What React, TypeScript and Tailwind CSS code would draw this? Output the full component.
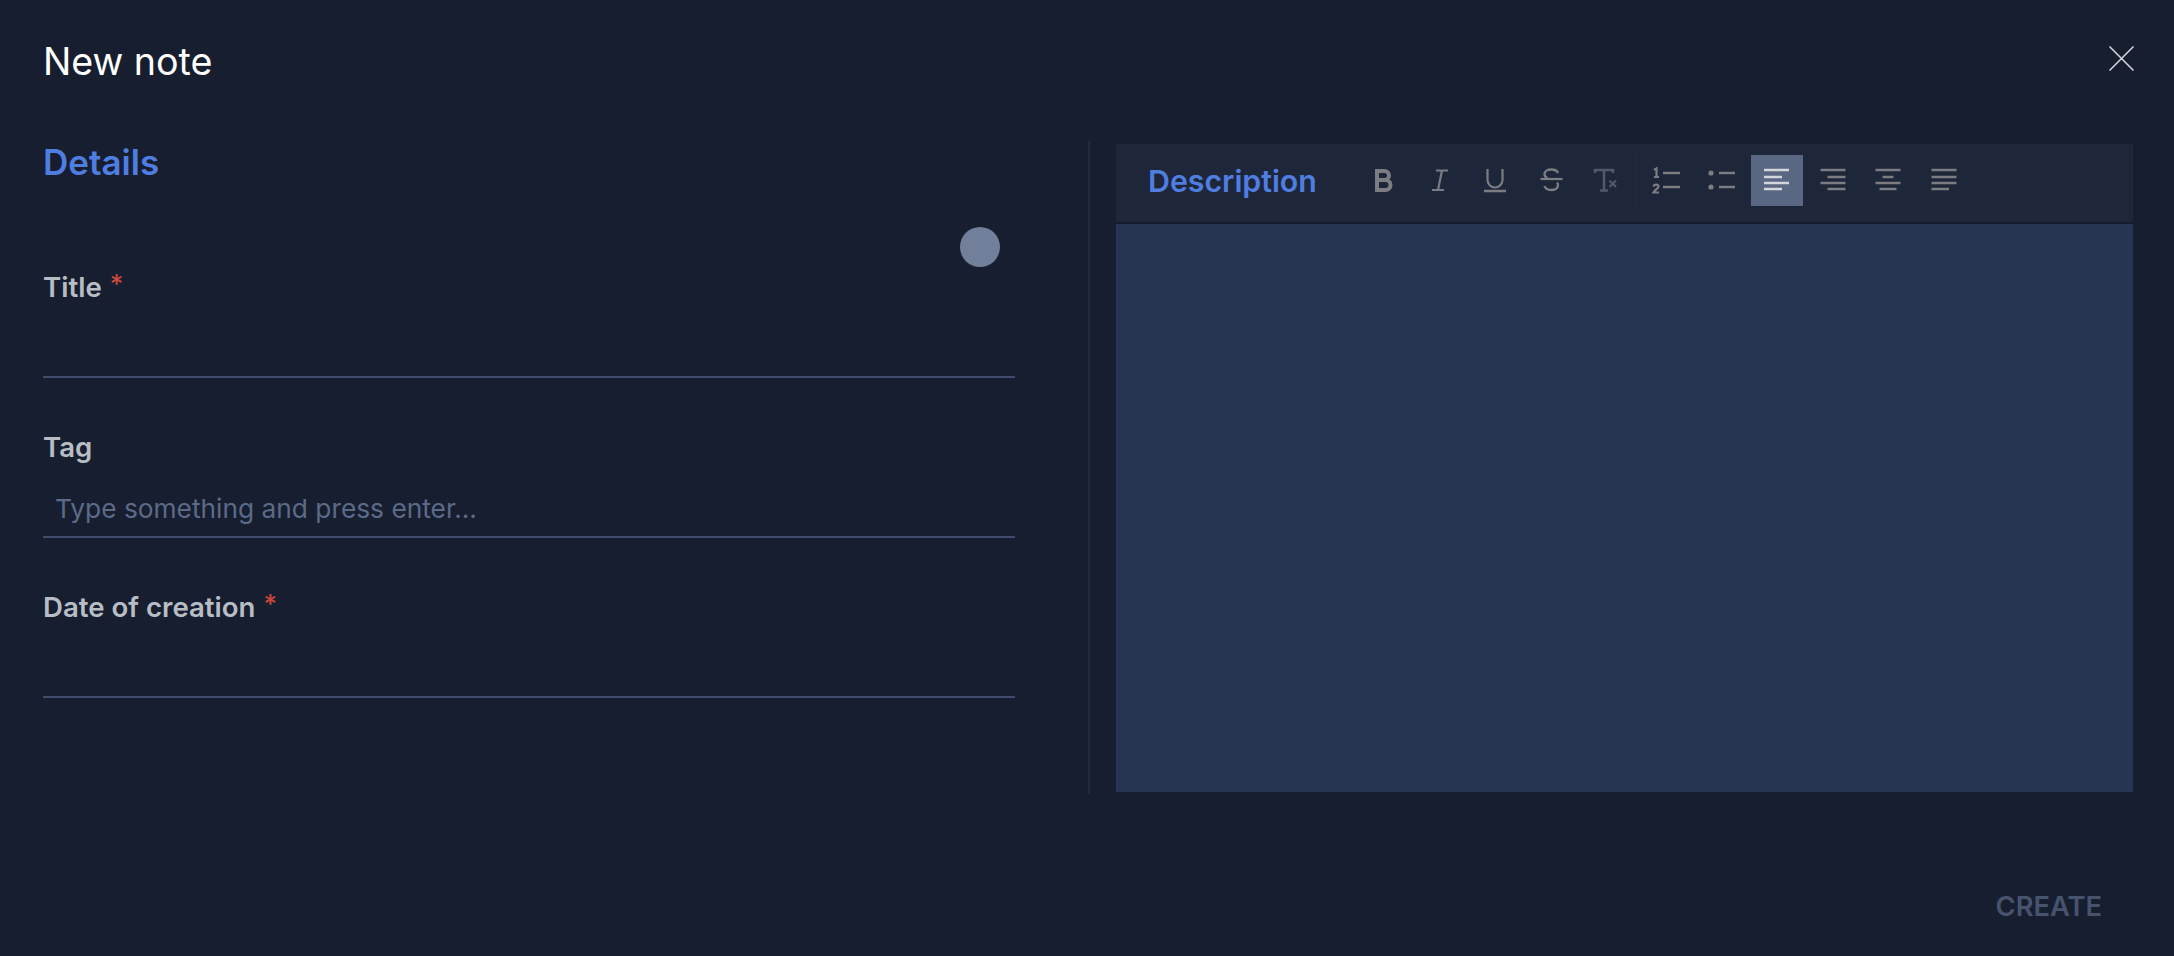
const FONT = "font-['Inter','Noto_Sans',sans-serif]";

function ToolIcon({ children, active }: { children: React.ReactNode; active?: boolean }) {
  return (
    <button type="button" className={`block h-[51px] w-[52px] shrink-0 ${active ? 'bg-[#5a6783] text-[#d3d6dd]' : 'text-[#7c7d82]'}`}>
      <svg className="block" viewBox="0 0 52 51" width={52} height={51} fill="none" stroke="currentColor" strokeWidth={2.5}>
        {children}
      </svg>
    </button>
  );
}

// align icons all use four lines, only the x ranges differ
function AlignLines({ lines }: { lines: [number, number][] }) {
  const ys = [15, 22, 28, 34];
  return (
    <>
      {lines.map(([a, b], i) => (
        <line key={i} x1={a} x2={b} y1={ys[i]} y2={ys[i]} />
      ))}
    </>
  );
}

function Toolbar() {
  return (
    <div className="flex items-center gap-[3.5px]">
      <ToolIcon>
        <path d="M19 16h7.500a4.500 4.500 0 0 1 0 9H19zM19 25h8.500a5 5 0 0 1 0 10H19z" strokeWidth={4} />
      </ToolIcon>
      <ToolIcon>
        <path d="M22 15.500h12M18 35h12M28 15.500 24 35" strokeWidth={2.200} />
      </ToolIcon>
      <ToolIcon>
        <path d="M18.500 14v11a7.500 7.500 0 0 0 15 0V14" strokeWidth={2.200} />
        <path d="M15 36h22" strokeWidth={2.500} />
      </ToolIcon>
      <ToolIcon>
        <path d="M15.500 24h22" strokeWidth={2.200} />
        <path d="M33 18c-.8-2.300-3.600-3.500-6.800-3.500-3.800 0-6.700 1.800-6.700 4.500 0 1.800 1 3.200 3 4M19.500 31c.8 2.500 3.500 4 6.800 4 3.900 0 6.700-1.900 6.700-4.700 0-1.100-.3-2-1-2.800" strokeWidth={2.400} />
      </ToolIcon>
      <ToolIcon>
        <g stroke="#50586a">
          <path d="M15 18v-3h18v3M24 15v20M20 35.500h8" strokeWidth={2.600} />
          <path d="M29.500 25.500l6.500 6.500M36 25.500l-6.500 6.500" strokeWidth={2.200} />
        </g>
      </ToolIcon>
      <div className="h-[51px] w-px bg-[#232c40]" />
      <ToolIcon>
        <path d="M23 18h17M23 32h17" />
        <path d="M14 15l2.500-1.500V22M14 22h5" strokeWidth={2.200} />
        <path d="M13.500 31.500c.5-2.500 5-2.500 5 0 0 2-3.500 3-5 6h5.500" strokeWidth={2.200} />
      </ToolIcon>
      <ToolIcon>
        <circle cx={15} cy={18} r={2.600} fill="currentColor" stroke="none" />
        <circle cx={15} cy={32} r={2.600} fill="currentColor" stroke="none" />
        <path d="M23 18h16M23 32h16" />
      </ToolIcon>
      <ToolIcon active>
        <AlignLines lines={[[13, 38], [13, 31], [13, 38], [13, 31]]} />
      </ToolIcon>
      <ToolIcon>
        <AlignLines lines={[[13.500, 38.500], [20.500, 38.500], [13.500, 38.500], [20.500, 38.500]]} />
      </ToolIcon>
      <ToolIcon>
        <AlignLines lines={[[13.500, 38.500], [20.500, 31.500], [13.500, 38.500], [17.500, 34.500]]} />
      </ToolIcon>
      <ToolIcon>
        <AlignLines lines={[[13.500, 38.500], [13.500, 38.500], [13.500, 38.500], [13.500, 31]]} />
      </ToolIcon>
    </div>
  );
}

function Field({ label, required, placeholder }: { label: string; required?: boolean; placeholder?: string }) {
  return (
    <div className="flex flex-col">
      <label className="h-[40px] text-[27.600px] leading-[40px] font-semibold text-[#b7bdc5]">
        {label}
        {required && <span className="ml-[8px] align-[4px] text-[26px] leading-[0] font-medium text-[#c9483b]">*</span>}
      </label>
      <input
        placeholder={placeholder}
        className="h-[71px] w-full border-b-2 border-[#414e6b] bg-transparent px-[12px] pt-[13px] text-[26.300px] outline-none placeholder:text-[#5c6a88]"
      />
    </div>
  );
}

export default function App() {
  return (
    <div className={`flex h-screen w-full flex-col bg-[#171e2f] ${FONT}`}>
      <div className="flex h-[141px] shrink-0 items-start justify-between pl-[43px] pr-[40px]">
        <h1 className="mt-[38px] text-[37.600px] leading-[48px] font-normal text-white">New note</h1>
        <svg className="mt-[46px]" width={25} height={25} viewBox="0 0 25 25" stroke="#d5d8de" strokeWidth={1.500} fill="none">
          <path d="M.5.5l24 24M24.500.5l-24 24" />
        </svg>
      </div>

      <div className="flex h-[653px] shrink-0">
        <div className="relative w-[1088px] shrink-0 pl-[43px] pr-[73px]">
          <h2 className="-mt-[1px] h-[44px] text-[35px] leading-[44px] font-semibold text-[#4f7de0]">Details</h2>
          <div className="mt-[83px] flex flex-col gap-[49px]">
            <Field label="Title" required />
            <Field label="Tag" placeholder="Type something and press enter..." />
            <Field label="Date of creation" required />
          </div>
          <div className="absolute left-[960px] top-[86px] h-[40px] w-[40px] rounded-full bg-[#717f9a]" />
        </div>
        <div className="w-[2px] shrink-0 bg-[#222b40]" />
        <div className="ml-[26px] mt-[3px] flex h-[648px] w-[1017px] shrink-0 flex-col">
          <div className="flex h-[80px] shrink-0 border-b-2 border-[#151b2b] bg-[#1e2639] pl-[32px] pt-[11px]">
            <h2 className="w-[210px] shrink-0 pt-[6px] text-[30.300px] leading-[40px] font-semibold text-[#4f7de0]">Description</h2>
            <div className="h-[51px]">
              <Toolbar />
            </div>
          </div>
          <div className="flex-1 bg-[#273552]" />
        </div>
      </div>

      <div className="flex flex-1 items-start justify-end pr-[72px] pt-[95px]">
        <button type="button" className="text-[27.300px] leading-[36px] font-semibold text-[#47536d]">CREATE</button>
      </div>
    </div>
  );
}
